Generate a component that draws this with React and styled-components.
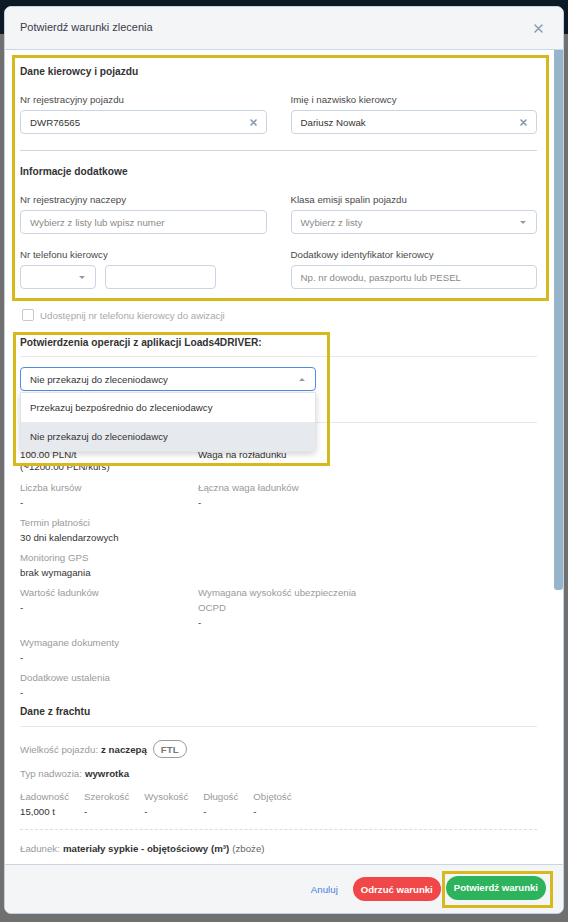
import React from 'react';
import styled, { createGlobalStyle } from 'styled-components';

const GlobalStyle = createGlobalStyle`
    html, body {
        margin: 0;
        padding: 0;
    }
    body {
        height: 922px;
        overflow: hidden;
        background: linear-gradient(#0b1a26 0, #0b1a26 34px, #707070 34px);
        font-family: "Liberation Sans", Arial, sans-serif;
        color: #333;
    }
`;

const Page = styled.div`
    padding: 6px 0 0 4px;
`;

const Modal = styled.div`
    width: 560px;
    height: 908px;
    box-sizing: border-box;
    background: #fff;
    border: 1px solid #c3d1de;
    border-radius: 7px;
    display: flex;
    flex-direction: column;
    overflow: hidden;
`;

const Header = styled.div`
    height: 42px;
    flex: none;
    display: flex;
    align-items: center;
    justify-content: space-between;
    padding: 0 20px 0 15px;
    background: #f3f5f7;
    border-bottom: 1px solid #cad6e2;
    .title {
        font-size: 11px;
        color: #3b3b4a;
        margin-top: -2px;
    }
`;

const BodyRow = styled.div`
    flex: 1;
    min-height: 0;
    display: flex;
`;

const Body = styled.div`
    flex: 1;
    overflow: hidden;
    position: relative;
    padding: 5px 17px 0 15px;
    font-size: 9.7px;
`;

const ScrollTrack = styled.div`
    width: 9px;
    flex: none;
    background: #fff;
    .thumb {
        height: 540px;
        background: #96b5cb;
        border-radius: 0 0 3px 3px;
    }
`;

const Footer = styled.div`
    height: 48px;
    flex: none;
    display: flex;
    align-items: center;
    justify-content: flex-end;
    padding: 0 10px 0 0;
    background: #f3f5f7;
    border-top: 1px solid #cad6e2;
    font-size: 9.7px;
`;

const Highlight = styled.div`
    border: 3px solid #d6b91c;
    margin: 0 -12px 0 -8px;
    padding: 7px 9px 9px 5px;
`;

const Marker = styled.div`
    position: absolute;
    top: -4px;
    left: -7px;
    width: 317px;
    height: 134px;
    box-sizing: border-box;
    border: 3px solid #d6b91c;
    pointer-events: none;
    z-index: 3;
`;

const SectionTitle = styled.div`
    font-size: 10.2px;
    font-weight: bold;
    line-height: 14px;
    color: #333;
    margin-top: ${(p) => p.$top || 0}px;
`;

const Divider = styled.div`
    height: 0;
    border-top: 1px ${(p) => (p.$dashed ? 'dashed' : 'solid')} ${(p) => p.$color || '#e6e9ec'};
    margin: ${(p) => p.$margin || '0'};
`;

const FormGrid = styled.div`
    display: grid;
    grid-template-columns: 1fr 1fr;
    column-gap: 24px;
    row-gap: 14px;
    margin-top: 14px;
`;

const Label = styled.div`
    line-height: 14px;
    color: #4a4a4a;
    margin-bottom: 3px;
`;

const InputBox = styled.div`
    height: 24px;
    box-sizing: border-box;
    width: ${(p) => (p.$width ? `${p.$width}px` : 'auto')};
    border: 1px solid ${(p) => (p.$focus ? '#4a90e2' : '#c9d5e2')};
    border-radius: 4px;
    padding: 0 9px;
    display: flex;
    align-items: center;
    justify-content: space-between;
    background: #fff;
    color: ${(p) => (p.$placeholder ? '#8a8a8a' : '#333')};
`;

const Caret = styled.span`
    width: 0;
    height: 0;
    border-left: 3px solid transparent;
    border-right: 3px solid transparent;
    ${(p) => (p.$up ? 'border-bottom: 3px solid #999;' : 'border-top: 3px solid #999;')}
    margin-right: 1px;
`;

const PhoneRow = styled.div`
    display: flex;
    gap: 9px;
`;

const CheckRow = styled.div`
    display: flex;
    align-items: center;
    gap: 6px;
    margin: 8px 0 0 2px;
    color: #a8a8a8;
    .box {
        width: 12px;
        height: 12px;
        box-sizing: border-box;
        border: 1px solid #c8c8c8;
        border-radius: 2px;
    }
`;

const Relative = styled.div`
    position: relative;
`;

const SelectWrap = styled.div`
    position: relative;
    width: 296px;
    margin-top: 10px;
    z-index: 2;
`;

const Menu = styled.div`
    position: absolute;
    top: 25px;
    left: 0;
    right: 0;
    background: #fff;
    border: 1px solid #e1e4e8;
    border-radius: 0 0 4px 4px;
    box-shadow: 0 2px 6px rgba(0, 0, 0, 0.18);
    overflow: hidden;
`;

const Option = styled.div`
    height: 29px;
    display: flex;
    align-items: center;
    padding-left: 9px;
    color: #333;
    background: ${(p) => (p.$active ? '#e6e9ed' : '#fff')};
`;

const DetailGrid = styled.div`
    display: grid;
    grid-template-columns: 178px 1fr;
    row-gap: 5px;
    margin-top: ${(p) => p.$top || 0}px;
`;

const Item = styled.div`
    line-height: 15px;
    .label {
        color: #9a9a9a;
    }
    .value {
        color: #333;
    }
    .sub {
        line-height: 9px;
        margin-bottom: 4px;
        color: #333;
    }
`;

const InlineLine = styled.div`
    display: flex;
    align-items: center;
    gap: 3px;
    min-height: 18px;
    margin-top: ${(p) => p.$top || 0}px;
    color: #9a9a9a;
    b {
        color: #333;
    }
    .plain {
        color: #666;
    }
`;

const Pill = styled.span`
    height: 16px;
    display: inline-flex;
    align-items: center;
    padding: 0 7px;
    border: 1px solid #9a9a9a;
    border-radius: 9px;
    font-weight: bold;
    color: #777;
    margin-left: 3px;
`;

const Dims = styled.div`
    display: flex;
    gap: 15px;
    margin-top: 7px;
    line-height: 15px;
    .label {
        color: #9a9a9a;
    }
`;

const LinkButton = styled.span`
    color: #4a80d8;
    margin-right: 15px;
`;

const Button = styled.span`
    height: 24px;
    display: inline-flex;
    align-items: center;
    padding: 0 ${(p) => p.$pad || 8}px;
    border-radius: 12px;
    background: ${(p) => p.$bg};
    color: #fff;
    font-weight: bold;
    font-size: 9.6px;
`;

const ButtonMark = styled.div`
    border: 3px solid #d6b91c;
    padding: 2px 4px 5px 1px;
    margin-left: 1px;
`;

const ClearIcon = () => (
    <svg width="7" height="7" viewBox="0 0 7 7">
        <path d="M1 1 L6 6 M6 1 L1 6" stroke="#8497ad" strokeWidth="1.6" strokeLinecap="round" />
    </svg>
);

const details = [
    [
        { label: 'Stawka', value: '100.00 PLN/t', sub: '(~1200.00 PLN/kurs)' },
        { label: 'Sposób rozliczenia', value: 'Waga na rozładunku' },
    ],
    [
        { label: 'Liczba kursów', value: '-' },
        { label: 'Łączna waga ładunków', value: '-' },
    ],
    [{ label: 'Termin płatności', value: '30 dni kalendarzowych' }, null],
    [{ label: 'Monitoring GPS', value: 'brak wymagania' }, null],
    [
        { label: 'Wartość ładunków', value: '-' },
        { label: ['Wymagana wysokość ubezpieczenia', 'OCPD'], value: '-' },
    ],
    [{ label: 'Wymagane dokumenty', value: '-' }, null],
    [{ label: 'Dodatkowe ustalenia', value: '-' }, null],
];

const route = [
    [{ label: 'Miejsce załadunku', value: 'Wrocław, PL 50-001' }, { label: 'Data załadunku', value: '12.06.2024' }],
    [{ label: 'Miejsce rozładunku', value: 'Poznań, PL 60-001' }, { label: 'Data rozładunku', value: '13.06.2024' }],
    [{ label: 'Dystans', value: '180 km' }, null],
];

const renderItems = (rows) =>
    rows.map((row, i) =>
        row.map((it, j) =>
            it ? (
                <Item key={`${i}-${j}`}>
                    {(Array.isArray(it.label) ? it.label : [it.label]).map((l) => (
                        <div className="label" key={l}>
                            {l}
                        </div>
                    ))}
                    <div className="value">{it.value}</div>
                    {it.sub && <div className="sub">{it.sub}</div>}
                </Item>
            ) : (
                <div key={`${i}-${j}`} />
            )
        )
    );

const Field = ({ label, children }) => (
    <div>
        <Label>{label}</Label>
        {children}
    </div>
);

const App = () => {
    return (
        <>
            <GlobalStyle />
            <Page>
                <Modal>
                    <Header>
                        <span className="title">Potwierdź warunki zlecenia</span>
                        <svg width="9" height="9" viewBox="0 0 9 9">
                            <path d="M1 1 L8 8 M8 1 L1 8" stroke="#8a9bb0" strokeWidth="1.5" strokeLinecap="round" />
                        </svg>
                    </Header>
                    <BodyRow>
                        <Body>
                            <Highlight>
                                <SectionTitle>Dane kierowcy i pojazdu</SectionTitle>
                                <FormGrid>
                                    <Field label="Nr rejestracyjny pojazdu">
                                        <InputBox>
                                            DWR76565
                                            <ClearIcon />
                                        </InputBox>
                                    </Field>
                                    <Field label="Imię i nazwisko kierowcy">
                                        <InputBox>
                                            Dariusz Nowak
                                            <ClearIcon />
                                        </InputBox>
                                    </Field>
                                </FormGrid>
                                <Divider $color="#ccd9e5" $margin="16px 0 14px" />
                                <SectionTitle>Informacje dodatkowe</SectionTitle>
                                <FormGrid>
                                    <Field label="Nr rejestracyjny naczepy">
                                        <InputBox $placeholder>Wybierz z listy lub wpisz numer</InputBox>
                                    </Field>
                                    <Field label="Klasa emisji spalin pojazdu">
                                        <InputBox $placeholder>
                                            Wybierz z listy
                                            <Caret />
                                        </InputBox>
                                    </Field>
                                    <Field label="Nr telefonu kierowcy">
                                        <PhoneRow>
                                            <InputBox $width={76}>
                                                <span />
                                                <Caret />
                                            </InputBox>
                                            <InputBox $width={111} />
                                        </PhoneRow>
                                    </Field>
                                    <Field label="Dodatkowy identyfikator kierowcy">
                                        <InputBox $placeholder>Np. nr dowodu, paszportu lub PESEL</InputBox>
                                    </Field>
                                </FormGrid>
                            </Highlight>
                            <CheckRow>
                                <span className="box" />
                                Udostępnij nr telefonu kierowcy do awizacji
                            </CheckRow>
                            <Relative>
                                <Marker />
                                <SectionTitle $top={15}>Potwierdzenia operacji z aplikacji Loads4DRIVER:</SectionTitle>
                                <Divider $margin="6px 0 0" />
                                <SelectWrap>
                                    <InputBox $focus>
                                        Nie przekazuj do zleceniodawcy
                                        <Caret $up />
                                    </InputBox>
                                    <Menu>
                                        <Option>Przekazuj bezpośrednio do zleceniodawcy</Option>
                                        <Option $active>Nie przekazuj do zleceniodawcy</Option>
                                    </Menu>
                                </SelectWrap>
                                <SectionTitle $top={11}>Warunki zlecenia</SectionTitle>
                                <Divider $margin="6px 0 0" />
                                <DetailGrid $top={9}>{renderItems(details)}</DetailGrid>
                            </Relative>
                            <SectionTitle $top={5}>Dane z frachtu</SectionTitle>
                            <Divider $margin="7px 0 0" />
                            <InlineLine $top={13}>
                                Wielkość pojazdu: <b>z naczepą</b>
                                <Pill>FTL</Pill>
                            </InlineLine>
                            <InlineLine $top={6}>
                                Typ nadwozia: <b>wywrotka</b>
                            </InlineLine>
                            <Dims>
                                {[
                                    ['Ładowność', '15,000 t'],
                                    ['Szerokość', '-'],
                                    ['Wysokość', '-'],
                                    ['Długość', '-'],
                                    ['Objętość', '-'],
                                ].map(([l, v]) => (
                                    <div key={l}>
                                        <div className="label">{l}</div>
                                        <div>{v}</div>
                                    </div>
                                ))}
                            </Dims>
                            <Divider $dashed $color="#dcdcdc" $margin="10px 0 9px" />
                            <InlineLine>
                                Ładunek: <b>materiały sypkie - objętościowy (m³)</b>
                                <span className="plain">(zboże)</span>
                            </InlineLine>
                            <SectionTitle $top={20}>Trasa</SectionTitle>
                            <Divider $margin="7px 0 0" />
                            <DetailGrid $top={9}>{renderItems(route)}</DetailGrid>
                        </Body>
                        <ScrollTrack>
                            <div className="thumb" />
                        </ScrollTrack>
                    </BodyRow>
                    <Footer>
                        <LinkButton>Anuluj</LinkButton>
                        <Button $bg="#f04848">Odrzuć warunki</Button>
                        <ButtonMark>
                            <Button $bg="#2eb35d">Potwierdź warunki</Button>
                        </ButtonMark>
                    </Footer>
                </Modal>
            </Page>
        </>
    );
};

export default App;
